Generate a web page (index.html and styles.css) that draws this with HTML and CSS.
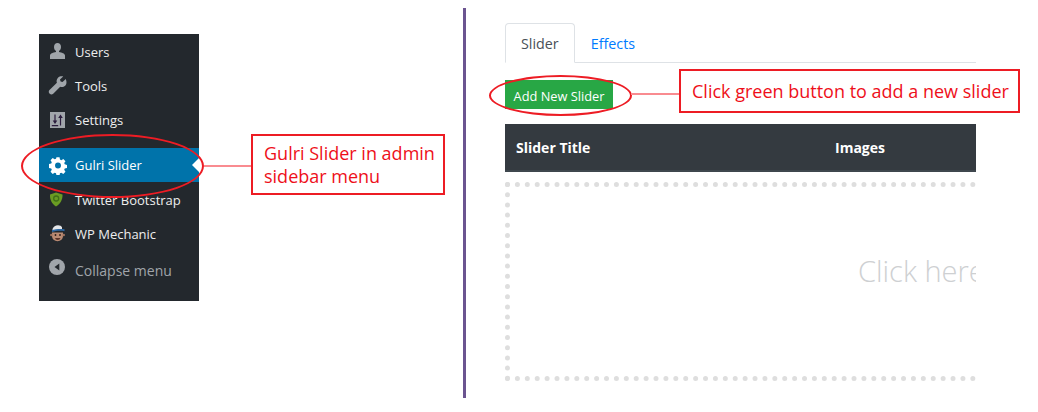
FILE: index.html
```html
<!DOCTYPE html>
<html lang="en">
<head>
<meta charset="utf-8">
<title>Gulri Slider</title>
<link rel="stylesheet" href="styles.css">
</head>
<body>
<div class="stage">
  <section class="left">
    <nav class="menu">
      <div class="item">
        <svg class="ico" viewBox="0 0 20 20"><path fill="#a0a5aa" d="M9.500 1c2 0 3.500 1.700 3.500 3.900 0 1.800-.8 3.300-2 4v1.200c2.600.5 6 1.500 6 3.400V17H2v-3.500c0-1.900 3.400-2.900 6-3.400V8.900c-1.200-.7-2-2.200-2-4C6 2.700 7.500 1 9.500 1z"/></svg>
        <span>Users</span>
      </div>
      <div class="item">
        <svg class="ico" viewBox="0 0 20 20"><path fill="#a0a5aa" d="M17.800 2.900l-3.300 3.100-1.900-.5-.6-1.900 3.200-3.100c-1.800-.5-3.800-.1-5.200 1.300-1.400 1.400-1.700 3.300-1.100 5L1.500 14.100c-1 1-1 2.500 0 3.500l.2.200c1 1 2.500 1 3.500 0l7-7c1.700.6 3.700.2 5-1.100 1.400-1.400 1.800-3.500 .6-6.800z"/></svg>
        <span>Tools</span>
      </div>
      <div class="item">
        <svg class="ico" viewBox="0 0 20 20"><path fill="#a0a5aa" d="M2 2h15v16H2z"/><path fill="#2b1d3d" d="M6.400 4.500h1.200v6h1.700L7 14l-2.300-3.500h1.700zM3.800 15h6.400v1.300H3.800zM11.900 15.500V8h-1.700L12.500 4.500 14.800 8h-1.700v7.500z"/></svg>
        <span>Settings</span>
      </div>
      <div class="item active">
        <svg class="ico" viewBox="0 0 20 20"><path fill="#fff" fill-rule="evenodd" d="M8.300 1.500h3.400l.5 2.500 1.500.7 2.200-1.400 2.400 2.400-1.400 2.200.6 1.400 2.500.6v3.400l-2.500.5-.6 1.500 1.400 2.200-2.400 2.400-2.200-1.400-1.500.6-.5 2.400H8.300l-.5-2.400-1.500-.6-2.200 1.400-2.400-2.400 1.400-2.200-.6-1.500-2.500-.5V8.900l2.500-.6.6-1.400-1.400-2.200 2.400-2.400 2.200 1.400 1.500-.7zM10 7.300a3.300 3.300 0 1 0 0 6.600 3.300 3.300 0 0 0 0-6.600z" transform="translate(1 1) scale(.9)"/></svg>
        <span>Gulri Slider</span>
      </div>
      <div class="item">
        <svg class="ico" viewBox="0 0 20 20"><path fill="#6a9c23" d="M2 4.500 8 2.500l6.500 2c.3 5-2.200 9.500-6.500 12C3.900 14 1.700 9.500 2 4.500z"/><circle cx="8.200" cy="8.500" r="2.500" fill="none" stroke="#3f6f17" stroke-width="1.300"/></svg>
        <span>Twitter Bootstrap</span>
      </div>
      <div class="item">
        <svg class="ico" viewBox="0 0 20 20"><path fill="#b98a72" d="M4 8.500h11v3.500c0 3-2.500 5.200-5.500 5.200S4 15 4 12z"/><circle cx="3.300" cy="11" r="1.300" fill="#9c705c"/><circle cx="15.700" cy="11" r="1.300" fill="#9c705c"/><path fill="#e4e6e8" d="M4.500 5c.8-2.500 3-3.800 5.500-3.800 2 0 3.500.7 4 2L14 6H4.500z"/><path fill="#2f6aa5" d="M4 6c3-.8 8-1.500 12.500-.8v2C12 6.500 7.500 7 4 8z"/><circle cx="7.500" cy="11" r=".9" fill="#2a1d18"/><circle cx="12" cy="11" r=".9" fill="#2a1d18"/><path fill="#5a3328" d="M7 14h5.500c-.4 1.300-1.500 2-2.800 2S7.400 15.300 7 14z"/></svg>
        <span>WP Mechanic</span>
      </div>
      <div class="item collapse">
        <svg class="ico" viewBox="0 0 20 20"><circle cx="9" cy="10" r="8" fill="#a0a5aa"/><path fill="#23282d" d="M11.300 6.500v7L6.500 10z"/></svg>
        <span>Collapse menu</span>
      </div>
    </nav>
  </section>
  <div class="divider"></div>
  <section class="right">
    <div class="tabs">
      <div class="tab current">Slider</div>
      <div class="tab link">Effects</div>
    </div>
    <button class="add">Add New Slider</button>
    <div class="thead">
      <div class="th first">Slider Title</div>
      <div class="th">Images</div>
    </div>
    <div class="drop"><span>Click here</span></div>
  </section>
  <div class="ring ring-a"></div>
  <div class="link-line line-a"></div>
  <div class="note note-a">Gulri Slider in admin sidebar menu</div>
  <div class="ring ring-b"></div>
  <div class="link-line line-b"></div>
  <div class="note note-b">Click green button to add a new slider</div>
</div>
</body>
</html>
```
FILE: styles.css
```css
* { box-sizing: border-box; }
html, body { margin: 0; padding: 0; background: #fff; }
.stage {
  position: relative;
  width: 1038px;
  height: 412px;
  display: flex;
  overflow: hidden;
  font-family: "Open Sans", "Noto Sans", sans-serif;
}
.left { width: 463px; padding: 34px 0 0 39px; }
.menu {
  width: 160px;
  height: 267px;
  padding-top: 1px;
  background: #23282d;
}
.item {
  position: relative;
  height: 34px;
  padding-left: 9px;
  display: flex;
  align-items: center;
  gap: 7px;
  color: #eee;
  font-size: 13px;
}
.ico { width: 20px; height: 20px; flex: none; }
.item:nth-child(3) { margin-bottom: 11px; }
.item.active { background: #0073aa; color: #fff; margin-bottom: 1px; }
.item.active::after {
  content: "";
  position: absolute;
  right: 0;
  top: 10px;
  border: 7px solid transparent;
  border-left-width: 0;
  border-right-color: #fff;
}
.collapse { margin-top: 3px; color: #a0a5aa; font-size: 14px; }
.collapse .ico { margin-bottom: 8px; }
.collapse span { margin-bottom: 2px; }
.divider {
  width: 3px;
  height: 390px;
  margin-top: 8px;
  background: #6b5490;
}
.right { width: 510px; padding: 23px 0 0 39px; overflow: hidden; }
.tabs {
  display: flex;
  height: 40px;
  border-bottom: 1px solid #dee2e6;
}
.tab { font-size: 14.300px; height: 40px; line-height: 42px; padding: 0 15px; }
.tab.current {
  color: #495057;
  background: #fff;
  border: 1px solid #dee2e6;
  border-bottom-color: #fff;
  border-radius: 4px 4px 0 0;
  line-height: 40px;
}
.tab.link { color: #007bff; padding-left: 16px; }
.add {
  display: block;
  width: 108px;
  height: 29px;
  margin: 17px 0 15px;
  padding: 2px 0 0;
  border: 0;
  background: #28a745;
  color: #fff;
  font: 12.800px "Open Sans", "Noto Sans", sans-serif;
}
.thead {
  display: flex;
  align-items: center;
  height: 48px;
  background: #343a40;
  border-bottom: 2px solid #3f474e;
  color: #fff;
  font-size: 14px;
  font-weight: 700;
}
.th.first { width: 330px; padding-left: 11px; }
.drop {
  width: 560px;
  height: 199px;
  margin-top: 10px;
  padding: 0 0 22px 348px;
  border: 5px dotted #dedede;
  display: flex;
  align-items: center;
  white-space: nowrap;
  color: #ced0d2;
  font-size: 29px;
  font-weight: 300;
}
.ring {
  position: absolute;
  border: 2.500px solid #ed1c24;
  border-radius: 50%;
}
.ring-a { left: 21px; top: 134px; width: 183px; height: 64px; }
.ring-b { left: 489px; top: 75px; width: 143px; height: 41px; }
.link-line { position: absolute; height: 2px; background: #f98b90; }
.line-a { left: 204px; top: 165px; width: 48px; }
.line-b { left: 631px; top: 93px; width: 49px; }
.note {
  position: absolute;
  border: 2px solid #ed1c24;
  background: #fff;
  color: #ee0f1a;
  font-size: 18px;
}
.note-a {
  left: 251px;
  top: 134px;
  width: 194px;
  height: 61px;
  padding: 6px 0 0 11px;
  line-height: 23px;
}
.note-b {
  left: 679px;
  top: 69px;
  width: 341px;
  height: 44px;
  padding-left: 11px;
  line-height: 40px;
  white-space: nowrap;
}
```
